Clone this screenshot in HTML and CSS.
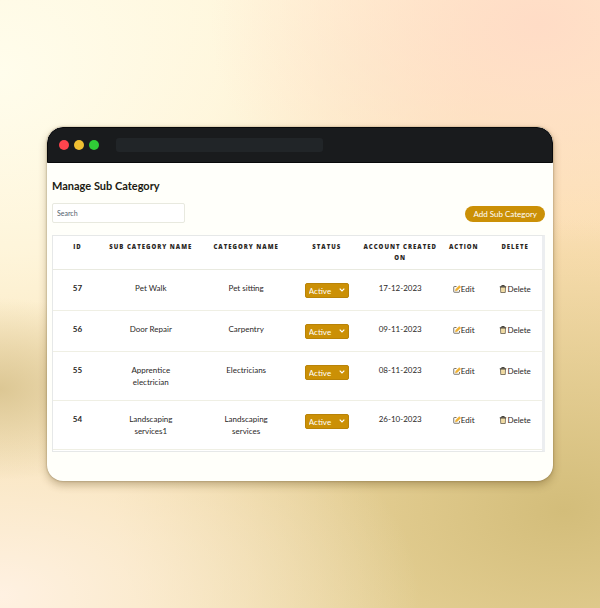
FILE: index.html
```html
<!DOCTYPE html>
<html lang="en">
<head>
<meta charset="utf-8">
<meta name="viewport" content="width=device-width, initial-scale=1">
<title>Manage Sub Category</title>
<link rel="stylesheet" href="styles.css">
</head>
<body>
<svg class="sprite" aria-hidden="true">
  <symbol id="edit" viewBox="0 0 16 16">
    <path d="M7 3H2.500Q1.500 3 1.500 4V13.500Q1.500 14.500 2.500 14.500H12Q13 14.500 13 13.500V10" fill="none" stroke="#6b675c" stroke-width="1.800"/>
    <path d="M4.500 12L5.500 8L12.500 1L15.500 4L8.500 11Z" fill="#f2b331" stroke="#d79c25" stroke-width=".6"/>
  </symbol>
  <symbol id="trash" viewBox="0 0 14 16">
    <path d="M2 4H12L11.500 15H2.500Z" fill="#f6e2ac" stroke="#5b5343" stroke-width="1.500" stroke-linejoin="round"/>
    <path d="M0.500 3.500H13.500M4.500 3V1H9.500V3" fill="none" stroke="#39342b" stroke-width="1.800"/>
    <path d="M7 7V12.500" stroke="#dcbd74" stroke-width="1"/>
  </symbol>
  <symbol id="chevron" viewBox="0 0 6 4">
    <path d="M.7.700L3 3L5.300.700" fill="none" stroke="#fff" stroke-width="1.200"/>
  </symbol>
</svg>
<main class="window">
  <div class="titlebar">
    <span class="dot red"></span><span class="dot yellow"></span><span class="dot green"></span>
    <span class="address"></span>
  </div>
  <section class="content">
    <h1>Manage Sub Category</h1>
    <div class="toolbar">
      <input class="search" type="search" placeholder="Search" aria-label="Search">
      <button class="add" type="button">Add Sub Category</button>
    </div>
    <div class="table-box">
      <table>
        <colgroup><col class="c-id"><col class="c-sub"><col class="c-cat"><col class="c-status"><col class="c-date"><col class="c-edit"><col class="c-delete"></colgroup>
        <thead>
          <tr><th>ID</th><th>SUB CATEGORY NAME</th><th>CATEGORY NAME</th><th>STATUS</th><th>ACCOUNT CREATED ON</th><th>ACTION</th><th>DELETE</th></tr>
        </thead>
        <tbody>
          <tr>
            <td class="id">57</td><td class="name">Pet Walk</td><td class="name">Pet sitting</td>
            <td class="control"><span class="status"><select aria-label="Status of 57"><option>Active</option></select><svg><use href="#chevron"/></svg></span></td>
            <td class="date">17-12-2023</td>
            <td class="control"><a href="#edit-57"><svg><use href="#edit"/></svg>Edit</a></td>
            <td class="control"><a href="#delete-57"><svg><use href="#trash"/></svg>Delete</a></td>
          </tr>
          <tr>
            <td class="id">56</td><td class="name">Door Repair</td><td class="name">Carpentry</td>
            <td class="control"><span class="status"><select aria-label="Status of 56"><option>Active</option></select><svg><use href="#chevron"/></svg></span></td>
            <td class="date">09-11-2023</td>
            <td class="control"><a href="#edit-56"><svg><use href="#edit"/></svg>Edit</a></td>
            <td class="control"><a href="#delete-56"><svg><use href="#trash"/></svg>Delete</a></td>
          </tr>
          <tr>
            <td class="id">55</td><td class="name">Apprentice electrician</td><td class="name">Electricians</td>
            <td class="control"><span class="status"><select aria-label="Status of 55"><option>Active</option></select><svg><use href="#chevron"/></svg></span></td>
            <td class="date">08-11-2023</td>
            <td class="control"><a href="#edit-55"><svg><use href="#edit"/></svg>Edit</a></td>
            <td class="control"><a href="#delete-55"><svg><use href="#trash"/></svg>Delete</a></td>
          </tr>
          <tr>
            <td class="id">54</td><td class="name">Landscaping services1</td><td class="name">Landscaping services</td>
            <td class="control"><span class="status"><select aria-label="Status of 54"><option>Active</option></select><svg><use href="#chevron"/></svg></span></td>
            <td class="date">26-10-2023</td>
            <td class="control"><a href="#edit-54"><svg><use href="#edit"/></svg>Edit</a></td>
            <td class="control"><a href="#delete-54"><svg><use href="#trash"/></svg>Delete</a></td>
          </tr>
        </tbody>
      </table>
    </div>
  </section>
</main>
</body>
</html>
```
FILE: styles.css
```css
* { box-sizing: border-box; }

body {
  margin: 0;
  min-height: 100vh;
  padding: 24px 47px;
  display: flex;
  align-items: center;
  font-family: Lato, "Open Sans", sans-serif;
  font-size: 8px;
  line-height: 12px;
  color: #2b281f;
  background:
    radial-gradient(ellipse 55% 38% at 90% 4%, #ffdcc6 0%, #ffdcc600 100%),
    radial-gradient(ellipse 24% 15% at 0% 64%, #dcc794 0%, #dcc79400 100%),
    radial-gradient(ellipse 80% 66% at 0% 12%, #fffdec 0%, #fffae4cc 45%, #fff6dc00 100%),
    radial-gradient(ellipse 70% 40% at 0% 98%, #fff1e2 0%, #fff1e200 100%),
    radial-gradient(ellipse 75% 48% at 94% 84%, #d3bd7a 0%, #d3bd7a00 100%),
    linear-gradient(180deg, #ffefce 0%, #fbdfb2 40%, #f3dfaa 100%);
}

.sprite { position: absolute; width: 0; height: 0; }

.window {
  width: 100%;
  border-radius: 16px;
  overflow: hidden;
  background: #fffffa;
  box-shadow: 0 4px 8px #5a431655, 0 0 2px #5a431688;
}

.titlebar {
  display: flex;
  align-items: center;
  gap: 5px;
  height: 36px;
  padding: 0 11px;
  background: #191b1d;
  border: 1px solid #08090b;
  border-radius: 16px 16px 0 0;
}

.dot { width: 10px; height: 10px; border-radius: 50%; }
.red { background: #ff444d; }
.yellow { background: #f0c032; }
.green { background: #30cb37; }

.address {
  width: 43%;
  height: 14px;
  margin-left: 12px;
  border-radius: 3px;
  background: #212528;
}

.content { padding: 16px 8px 29px 5px; }

h1 {
  margin: 0 0 10px;
  font-size: 11px;
  line-height: 14px;
  font-weight: 700;
  color: #201b12;
}

.toolbar {
  display: flex;
  align-items: flex-end;
  justify-content: space-between;
  margin-bottom: 12px;
}

.search {
  appearance: none;
  width: 27%;
  height: 20px;
  padding: 0 4px;
  border: 1px solid #e8e9df;
  border-radius: 2px;
  background: #fff;
  font: inherit;
  font-size: 7px;
  outline: none;
}
.search::placeholder { color: #53616d; opacity: 1; }

.add {
  height: 16px;
  margin-bottom: 1px;
  padding: 0 8px;
  border: 0;
  border-radius: 8px;
  background: #cb9006;
  color: #fff;
  font: inherit;
}

.table-box {
  padding-bottom: 1px;
  border: 1px solid #e6e8e8;
  border-right: 3px solid #eceef0;
  background: #fff;
}

table {
  width: 100%;
  table-layout: fixed;
  border-collapse: separate;
  border-spacing: 0;
  text-align: center;
}

.c-id { width: 10%; }
.c-sub { width: 20%; }
.c-cat { width: 19%; }
.c-status { width: 14%; }
.c-date { width: 16%; }
.c-edit { width: 10%; }
.c-delete { width: 11%; }

th {
  padding: 6px 0 5px;
  font-family: "Open Sans", sans-serif;
  font-size: 6px;
  line-height: 11px;
  font-weight: 800;
  letter-spacing: 1px;
  vertical-align: top;
  border-bottom: 1px solid #e9eae0;
}

td {
  padding: 12px 0;
  vertical-align: top;
  border-bottom: 1px solid #efefe4;
}
.name { padding-left: 20px; padding-right: 20px; }
.id { font-weight: 700; }
.control { padding-top: 13px; }

.status { position: relative; display: block; width: 44px; height: 15px; margin: 0 auto; }
.status select {
  appearance: none;
  display: block;
  width: 100%;
  height: 15px;
  padding: 0 3px;
  border: 1px solid #b98308;
  border-radius: 2px;
  background: #cb9006;
  color: #fff;
  font: inherit;
}
.status svg { position: absolute; right: 4px; top: 5px; width: 6px; height: 4px; pointer-events: none; }

a {
  display: flex;
  align-items: center;
  justify-content: center;
  height: 12px;
  color: inherit;
  text-decoration: none;
}
a svg { width: 8px; height: 8px; flex: none; }
```
